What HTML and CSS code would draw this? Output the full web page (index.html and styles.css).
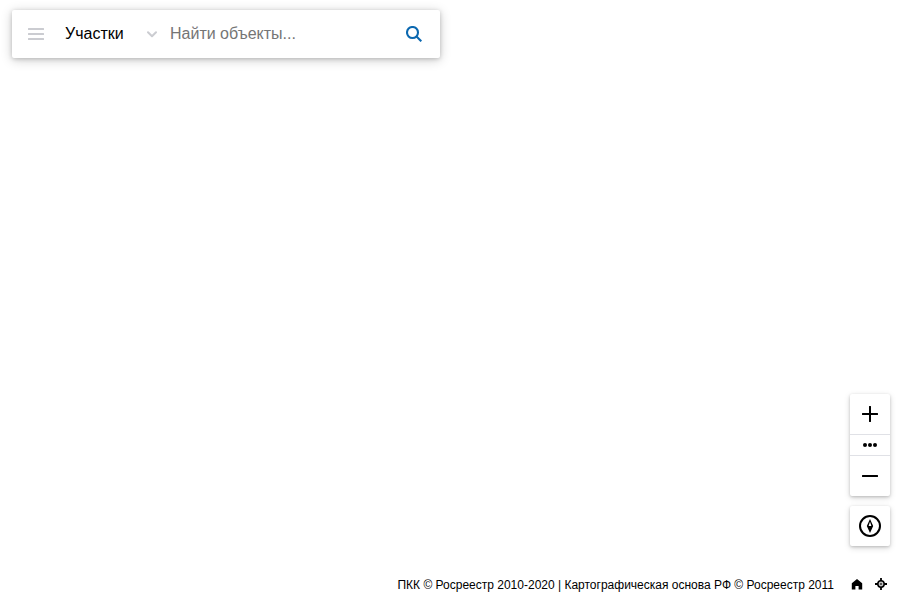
FILE: index.html
```html
<!DOCTYPE html>
<html lang="ru">
<head>
<meta charset="utf-8">
<title>Карта</title>
<link rel="stylesheet" href="styles.css">
</head>
<body>
<header class="search">
  <button class="icon-btn menu" aria-label="Меню"><svg width="16" height="12" viewBox="0 0 16 12"><path d="M.7 1h14.6M.7 6h14.6M.7 11h14.6" stroke="#cbccd1" stroke-width="2" stroke-linecap="round"/></svg></button>
  <button class="category"><span>Участки</span><svg width="10" height="7" viewBox="0 0 10 7"><path d="M1 1.2 5 5.2 9 1.2" fill="none" stroke="#cbccd1" stroke-width="2" stroke-linecap="round" stroke-linejoin="round"/></svg></button>
  <input class="query" type="text" placeholder="Найти объекты...">
  <button class="icon-btn submit" aria-label="Найти"><svg width="16" height="16" viewBox="0 0 16 16"><g fill="none" stroke="#0b68b0" stroke-width="2.1"><circle cx="6.5" cy="6.5" r="5.5"/><path d="m10.3 10.3 5 5"/></g></svg></button>
</header>
<main class="map">
  <div class="controls">
    <div class="card">
      <button class="control"><svg width="16" height="16" viewBox="0 0 16 16"><path d="M8 .8v14.4M.8 8h14.4" stroke="#000" stroke-width="2" stroke-linecap="round"/></svg></button>
      <button class="control more"><svg width="14" height="4" viewBox="0 0 14 4"><circle cx="2" cy="2" r="2"/><circle cx="7" cy="2" r="2"/><circle cx="12" cy="2" r="2"/></svg></button>
      <button class="control"><svg width="16" height="2" viewBox="0 0 16 2"><path d="M.8 1h14.4" stroke="#000" stroke-width="2" stroke-linecap="round"/></svg></button>
    </div>
    <div class="card">
      <button class="control"><svg width="22" height="22" viewBox="0 0 22 22"><circle cx="11" cy="11" r="10" fill="none" stroke="#000" stroke-width="2"/><path fill-rule="evenodd" d="m11 4 3.2 7L11 18l-3.2-7zm0 2.8L9.6 11h2.8z"/></svg></button>
    </div>
  </div>
</main>
<footer class="footer">
  <span class="copyright">ПКК © Росреестр 2010-2020 | Картографическая основа РФ © Росреестр 2011</span>
  <svg class="home" width="12" height="11" viewBox="0 0 12 11"><path d="M6 0 11.2 4.2v6.3H7.6V7H4.4v3.5H.8V4.2z"/></svg>
  <svg class="locate" width="12" height="12" viewBox="0 0 12 12"><circle cx="6" cy="6" r="3.2" fill="#c4c4c4" stroke="#000" stroke-width="1.5"/><circle cx="6" cy="6" r="1" fill="#333"/><path d="M6 0v3M6 9v3M0 6h3M9 6h3" stroke="#000" stroke-width="1.8"/></svg>
</footer>
</body>
</html>
```
FILE: styles.css
```css
* { box-sizing: border-box; }
body { margin: 0; height: 600px; padding: 10px 10px 0 12px; display: flex; flex-direction: column; overflow: hidden; background: #fff; color: #000; font-family: "Liberation Sans", Arial, sans-serif; }
button { border: 0; margin: 0; padding: 0; background: none; color: #000; font: inherit; }
svg { display: block; flex: none; }
.search { display: flex; align-items: center; width: 428px; height: 48px; border-radius: 2px; background: #fff; box-shadow: 0 2px 12px rgba(0,0,0,.2), 0 1px 4px rgba(0,0,0,.18); font-size: 16px; }
.icon-btn { display: flex; align-items: center; justify-content: center; width: 48px; height: 48px; }
.category { display: flex; align-items: center; justify-content: space-between; width: 92px; margin-left: 5px; }
.query { flex: 1; min-width: 0; margin-left: 13px; padding: 0; border: 0; outline: 0; font: inherit; }
.query::placeholder { color: #757575; }
.submit { width: 52px; }
.map { flex: 1; display: flex; justify-content: flex-end; align-items: flex-end; padding-bottom: 22px; }
.controls { display: flex; flex-direction: column; gap: 10px; }
.card { width: 40px; border-radius: 2px; background: #fff; box-shadow: 0 2px 6px rgba(0,0,0,.15), 0 1px 3px rgba(0,0,0,.18); }
.control { display: flex; align-items: center; justify-content: center; width: 40px; height: 40px; }
.more { height: 22px; border-top: 1px solid #e0e1e6; border-bottom: 1px solid #e0e1e6; }
.footer { display: flex; align-items: center; justify-content: flex-end; height: 32px; padding-right: 3px; font-size: 12px; }
.copyright { padding-top: 2px; }
.home { margin-left: 17px; }
.locate { margin-left: 12px; }
```
